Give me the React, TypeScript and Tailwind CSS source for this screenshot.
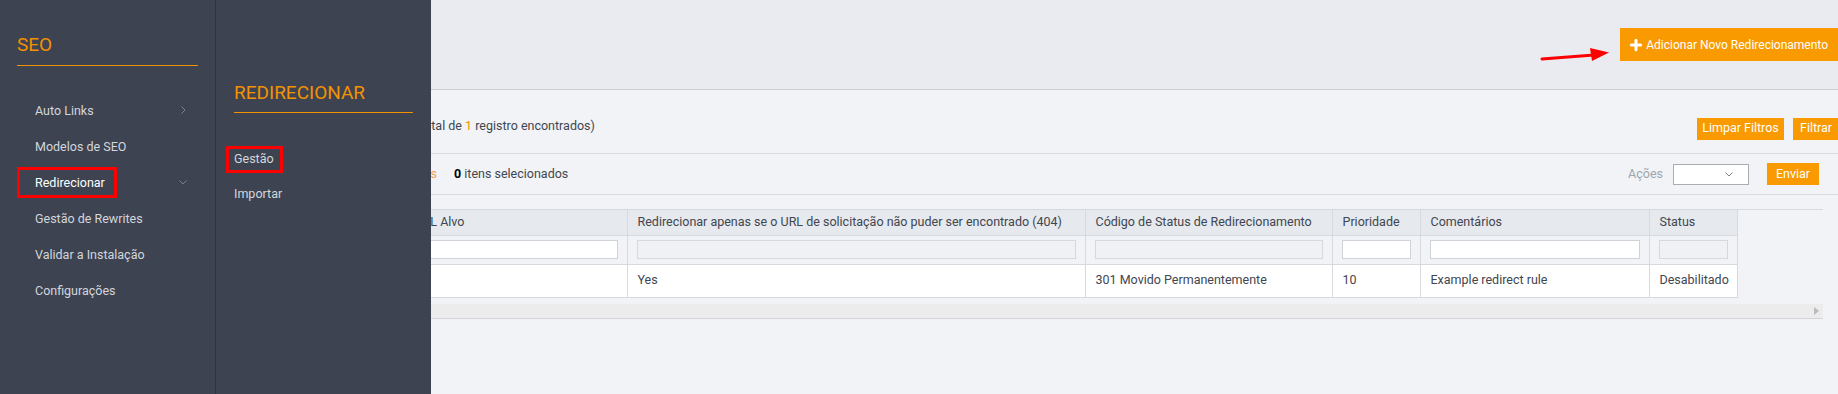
import { Plus } from "lucide-react";

const ORANGE = "#f99a00";

function Chevron({ dir }: { dir: "right" | "down" }) {
  return (
    <svg width="10" height="10" viewBox="0 0 10 10" className="text-[#7c828d]">
      {dir === "right" ? (
        <path d="M3.5 1.5 L7 5 L3.5 8.5" fill="none" stroke="currentColor" strokeWidth="1" />
      ) : (
        <path d="M1.5 3.5 L5 7 L8.5 3.5" fill="none" stroke="currentColor" strokeWidth="1" />
      )}
    </svg>
  );
}

function SeoMenu() {
  const items = ["Auto Links", "Modelos de SEO", "Redirecionar", "Gestão de Rewrites", "Validar a Instalação", "Configurações"];
  return (
    <div className="absolute left-0 top-0 h-full flex z-10">
      {/* first level */}
      <div className="w-[216px] h-full bg-[#3d4351] border-r border-[#2f3440]">
        <div className="mx-[17px] pt-[33px] pb-[9px] border-b border-[#f39200] text-[19px] leading-[23px] text-[#f39200]">
          SEO
        </div>
        <ul className="mt-[26px]">
          {items.map((label) => {
            const active = label === "Redirecionar";
            return (
              <li key={label} className="h-[36px] flex items-center justify-between pl-[35px] pr-[27px]">
                {active ? (
                  <span className="relative text-white leading-[15px]">
                    {label}
                    <span className="absolute left-[-18px] right-[-12px] top-[-8px] bottom-[-8px] border-[3px] border-[#ff0000]" />
                  </span>
                ) : (
                  <span className="text-[#d3d6dc] leading-[15px]">{label}</span>
                )}
                {label === "Auto Links" && <Chevron dir="right" />}
                {active && <Chevron dir="down" />}
              </li>
            );
          })}
        </ul>
      </div>

      {/* second level */}
      <div className="w-[215px] h-full bg-[#3d4351]">
        <div className="mx-[18px] pt-[81px] pb-[8px] border-b border-[#f39200] text-[19px] leading-[23px] text-[#f39200]">
          REDIRECIONAR
        </div>
        <ul className="mt-[27px] px-[18px]">
          <li className="h-[36px] flex items-center">
            <span className="relative text-[#d3d6dc] leading-[15px]">
              Gestão
              <span className="absolute left-[-8px] right-[-9px] top-[-5px] bottom-[-7px] border-[3px] border-[#ff0000]" />
            </span>
          </li>
          <li className="h-[36px] flex items-center text-[#d3d6dc]">Importar</li>
        </ul>
      </div>
    </div>
  );
}

function TextFilter() {
  return <div className="h-[19px] bg-white border border-[#cfd3d9]" />;
}

function SelectFilter() {
  return <div className="h-[19px] bg-[#f0f1f4] border border-[#d5d8dd]" />;
}

export default function App() {
  const headers = [
    "ID",
    "URL de Solicitação",
    "URL Alvo",
    "Redirecionar apenas se o URL de solicitação não puder ser encontrado (404)",
    "Código de Status de Redirecionamento",
    "Prioridade",
    "Comentários",
    "Status",
  ];
  const filters: ("text" | "select")[] = ["text", "text", "text", "select", "select", "text", "text", "select"];
  const row = ["1", "/old-page", "/", "Yes", "301 Movido Permanentemente", "10", "Example redirect rule", "Desabilitado"];

  return (
    <div className="relative w-[1838px] h-[394px] overflow-hidden bg-[#f1f3f7] font-['Roboto',sans-serif] text-[12.5px] text-[#41464f] flex">
      <SeoMenu />

      {/* admin nav under the flyout */}
      <div className="w-[88px] shrink-0 bg-[#3d4351]" />

      <div className="flex-1 flex flex-col">
        {/* page header */}
        <div className="h-[90px] shrink-0 bg-[#e9ebf0] border-b border-[#cbced4] flex justify-end items-start pt-[28px] -ml-[88px]">
          <button className="h-[33px] flex items-center gap-[2px] pl-[8px] pr-[10px] text-white text-[12px]" style={{ backgroundColor: ORANGE }}>
            <Plus size={16} strokeWidth={4.5} />
            Adicionar Novo Redirecionamento
          </button>
        </div>

        {/* toolbar */}
        <div className="h-[63px] shrink-0 pt-[10px] flex items-center pl-[30px]">
          <div className="w-[295px] shrink-0">Página 1 de 1</div>
          <span>
            (Total de <span className="text-[#f39200]">1</span> registro encontrados)
          </span>
          <div className="ml-auto flex gap-[9px] mt-[4px]">
            <button className="h-[22px] w-[87px] text-white" style={{ backgroundColor: ORANGE }}>
              Limpar Filtros
            </button>
            <button className="h-[22px] w-[45px] text-left pl-[7px] text-white" style={{ backgroundColor: ORANGE }}>
              Filtrar
            </button>
          </div>
        </div>

        {/* mass actions */}
        <div className="h-[42px] shrink-0 ml-[30px] border-y border-[#d6d9de] flex items-center pr-[19px]">
          <div className="w-[319px] shrink-0 text-right text-[#f5a24a] whitespace-nowrap overflow-hidden">
            Selecionar Todos | Selecionar Visíveis
          </div>
          <span className="ml-[17px]">
            <b className="text-black">0</b> itens selecionados
          </span>
          <span className="ml-auto text-[#a0a5ad]">Ações</span>
          <div className="ml-[10px] w-[76px] h-[21px] bg-white border border-[#a9acb1] flex items-center justify-end pr-[14px]">
            <Chevron dir="down" />
          </div>
          <button className="ml-[18px] h-[22px] w-[52px] text-white" style={{ backgroundColor: ORANGE }}>
            Enviar
          </button>
        </div>

        {/* grid */}
        <div className="mt-[14px] ml-[30px] mr-[15px] border-t border-[#d6d9de]">
          <table className="table-fixed border-collapse w-[1619px]">
            <colgroup>
              <col className="w-[60px]" />
              <col className="w-[226px]" />
              <col className="w-[223px]" />
              <col className="w-[458px]" />
              <col className="w-[247px]" />
              <col className="w-[88px]" />
              <col className="w-[229px]" />
              <col className="w-[88px]" />
            </colgroup>
            <thead>
              <tr className="bg-[#e6e9ee]">
                {headers.map((h) => (
                  <th key={h} className="h-[25px] px-[10px] text-left font-normal whitespace-nowrap overflow-hidden border-r border-b border-[#d6d9de]">
                    {h}
                  </th>
                ))}
              </tr>
              <tr className="bg-[#f1f3f7]">
                {filters.map((f, i) => (
                  <th key={i} className="h-[29px] px-[9px] font-normal border-r border-b border-[#d6d9de]">
                    {f === "text" ? <TextFilter /> : <SelectFilter />}
                  </th>
                ))}
              </tr>
            </thead>
            <tbody>
              <tr className="bg-white">
                {row.map((c, i) => (
                  <td key={i} className="h-[33px] px-[10px] whitespace-nowrap border-r border-b border-[#d6d9de]">
                    {c}
                  </td>
                ))}
              </tr>
            </tbody>
          </table>

          {/* horizontal scroller */}
          <div className="mt-[6px] h-[15px] bg-[#ececec] border-b border-[#d3d5d9] flex items-center justify-end pr-[4px]">
            <svg width="5" height="8" viewBox="0 0 5 8">
              <path d="M0 0 L5 4 L0 8 Z" fill="#b9bcc1" />
            </svg>
          </div>
        </div>
      </div>

      {/* annotation arrow */}
      <svg className="absolute left-[1540px] top-[45px] z-10" width="72" height="18" viewBox="0 0 72 18">
        <path d="M2 14 L54 10" stroke="#ff0000" strokeWidth="3" strokeLinecap="round" />
        <path d="M50 3 L69 7.5 L52 16 Z" fill="#ff0000" />
      </svg>
    </div>
  );
}
